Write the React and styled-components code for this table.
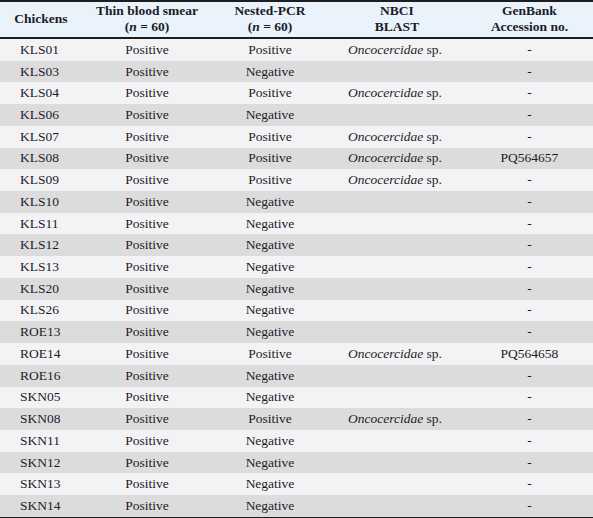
import React from "react";
import styled, { createGlobalStyle } from "styled-components";

const Global = createGlobalStyle`
  html, body { margin: 0; padding: 0; background: #ffffff; }
  body { font-family: "Liberation Serif", "Times New Roman", serif; color: #1c1c28; }
`;

const Table = styled.table`
  width: 593px;
  border-collapse: separate;
  border-spacing: 0;
  table-layout: fixed;
  font-size: 13.5px;
  border-top: 2px solid #1e1e1e;
  border-bottom: 2px solid #1e1e1e;
`;

const HeadRow = styled.tr`
  background: #eaf2fb;
`;

const HeadCell = styled.th`
  box-sizing: border-box;
  height: 37px;
  font-weight: bold;
  text-align: center;
  vertical-align: middle;
  line-height: 16px;
  padding: 0 0 1px;
  border-bottom: 2px solid #1e1e1e;
`;

const Row = styled.tr`
  background: ${(p) => (p.$shade ? "#dcdcdd" : "#f3f3f5")};
`;

const Cell = styled.td`
  box-sizing: border-box;
  height: 21.73px;
  padding: 0 0 0 ${(p) => (p.$align === "left" ? "20px" : "0")};
  text-align: ${(p) => p.$align || "center"};
  vertical-align: middle;
  line-height: 16px;
  white-space: nowrap;
`;

const Em = styled.i`
  font-style: italic;
`;

const rows = [
  ["KLS01", "Positive", "Positive", true, "-"],
  ["KLS03", "Positive", "Negative", false, "-"],
  ["KLS04", "Positive", "Positive", true, "-"],
  ["KLS06", "Positive", "Negative", false, "-"],
  ["KLS07", "Positive", "Positive", true, "-"],
  ["KLS08", "Positive", "Positive", true, "PQ564657"],
  ["KLS09", "Positive", "Positive", true, "-"],
  ["KLS10", "Positive", "Negative", false, "-"],
  ["KLS11", "Positive", "Negative", false, "-"],
  ["KLS12", "Positive", "Negative", false, "-"],
  ["KLS13", "Positive", "Negative", false, "-"],
  ["KLS20", "Positive", "Negative", false, "-"],
  ["KLS26", "Positive", "Negative", false, "-"],
  ["ROE13", "Positive", "Negative", false, "-"],
  ["ROE14", "Positive", "Positive", true, "PQ564658"],
  ["ROE16", "Positive", "Negative", false, "-"],
  ["SKN05", "Positive", "Negative", false, "-"],
  ["SKN08", "Positive", "Positive", true, "-"],
  ["SKN11", "Positive", "Negative", false, "-"],
  ["SKN12", "Positive", "Negative", false, "-"],
  ["SKN13", "Positive", "Negative", false, "-"],
  ["SKN14", "Positive", "Negative", false, "-"],
];

export default function App() {
  return (
    <>
      <Global />
      <Table>
        <colgroup>
          <col style={{ width: 82 }} />
          <col style={{ width: 130 }} />
          <col style={{ width: 116 }} />
          <col style={{ width: 138 }} />
          <col style={{ width: 127 }} />
        </colgroup>
        <thead>
          <HeadRow>
            <HeadCell>Chickens</HeadCell>
            <HeadCell>
              Thin blood smear
              <br />
              (<Em>n</Em> = 60)
            </HeadCell>
            <HeadCell>
              Nested-PCR
              <br />
              (<Em>n</Em> = 60)
            </HeadCell>
            <HeadCell>
              NBCI
              <br />
              BLAST
            </HeadCell>
            <HeadCell>
              GenBank
              <br />
              Accession no.
            </HeadCell>
          </HeadRow>
        </thead>
        <tbody>
          {rows.map(([id, smear, pcr, blast, acc], i) => (
            <Row key={id} $shade={i % 2 === 1}>
              <Cell $align="left">{id}</Cell>
              <Cell>{smear}</Cell>
              <Cell>{pcr}</Cell>
              <Cell $align="left">
                {blast ? (
                  <>
                    <Em>Oncocercidae</Em> sp.
                  </>
                ) : null}
              </Cell>
              <Cell>{acc}</Cell>
            </Row>
          ))}
        </tbody>
      </Table>
    </>
  );
}
